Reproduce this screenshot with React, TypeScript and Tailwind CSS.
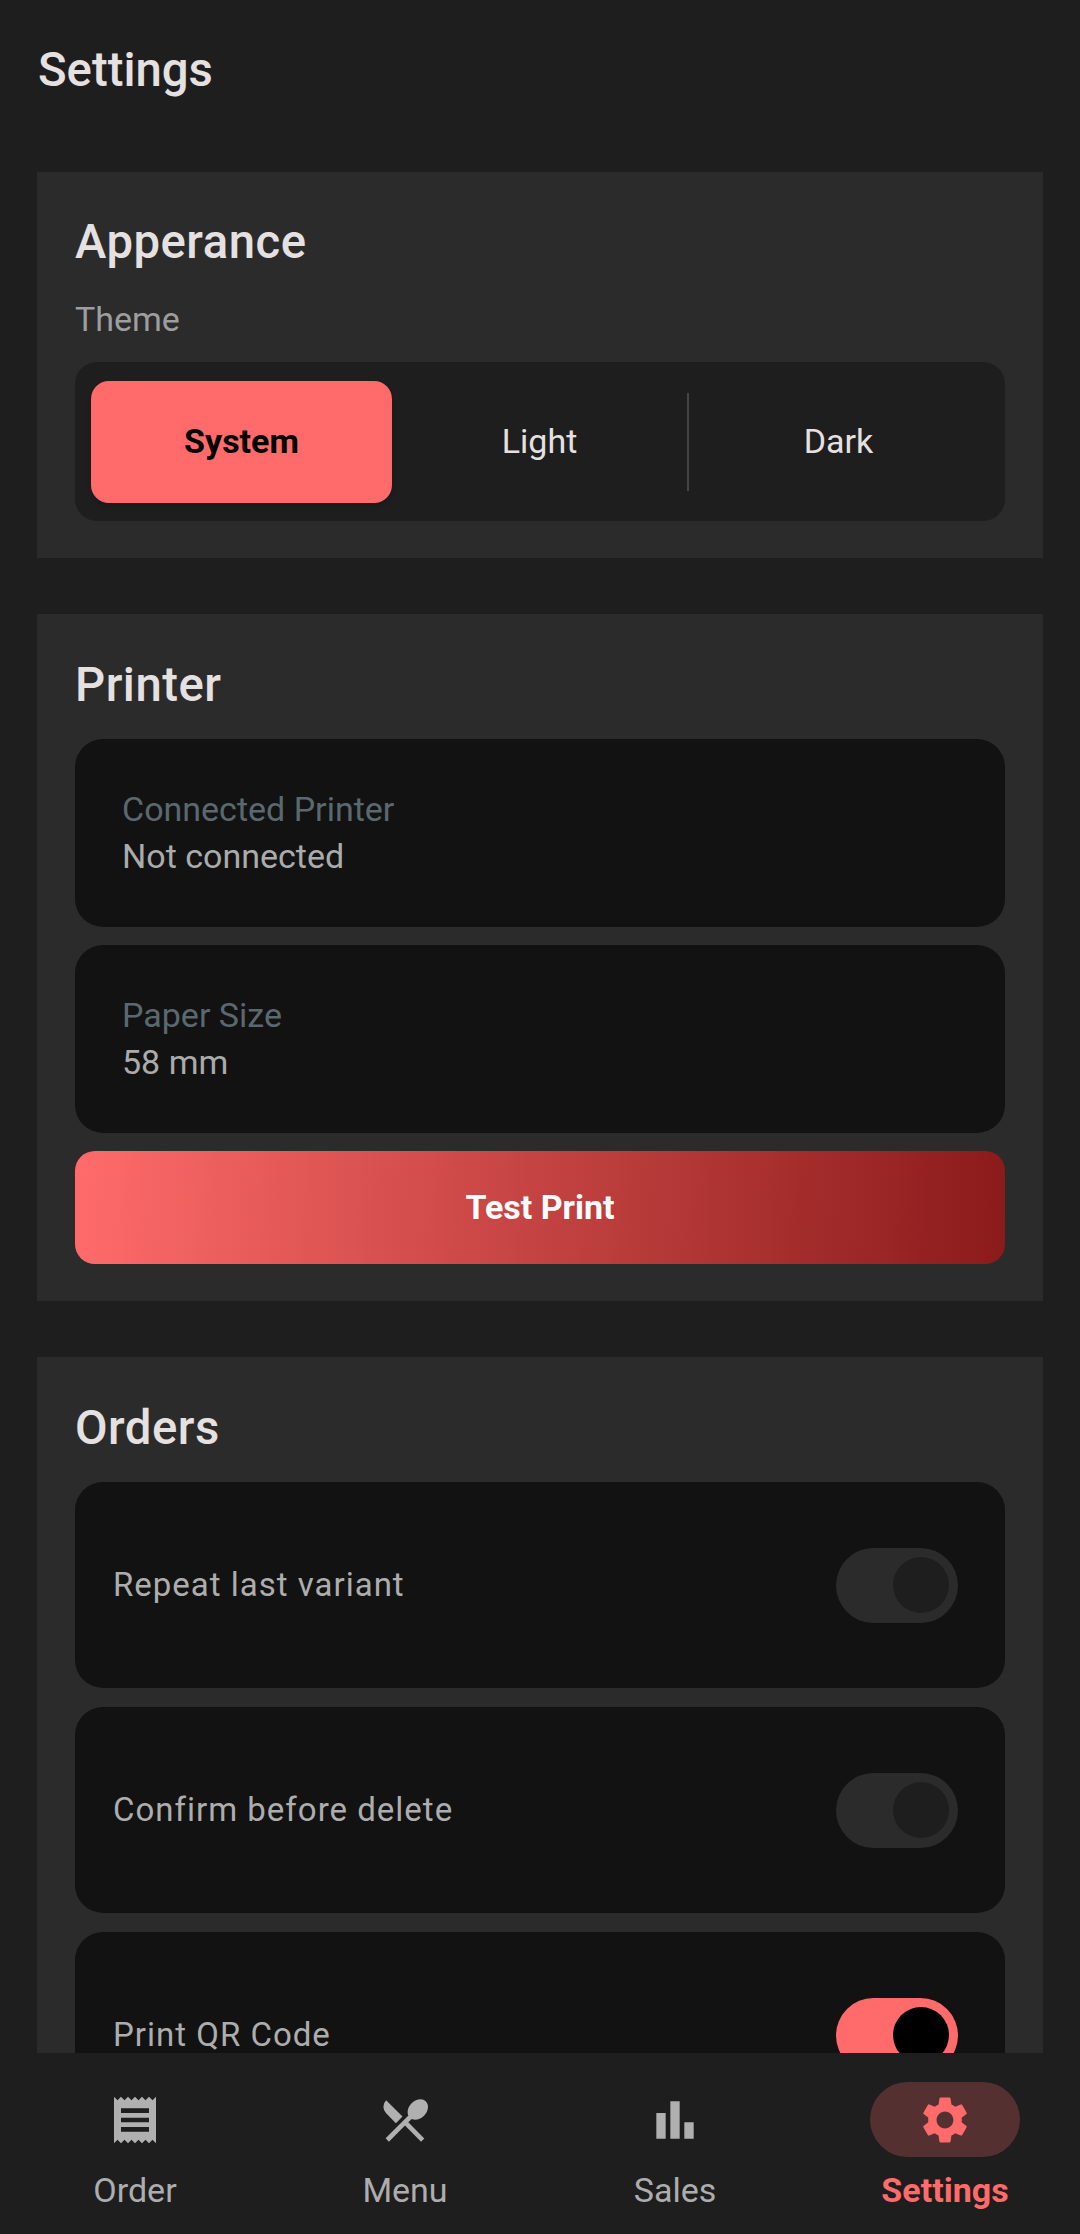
import { MdBarChart, MdReceipt, MdRestaurantMenu, MdSettings } from "react-icons/md";

function SectionTitle({ children }: { children: string }) {
  return (
    <h2 className="text-[47.25px] leading-[46px] font-medium tracking-[0.5px] text-[#e6e1e1]">
      {children}
    </h2>
  );
}

function InfoRow({ label, value }: { label: string; value: string }) {
  return (
    <div className="h-[187.5px] rounded-[28px] bg-[#121212] px-[47px] flex flex-col justify-center">
      <p className="text-[34px] leading-[47px] text-[#5b686e]">{label}</p>
      <p className="text-[34px] leading-[47px] text-[#ababab]">{value}</p>
    </div>
  );
}

function ToggleRow({ label, on }: { label: string; on?: boolean }) {
  return (
    <div className="h-[206px] shrink-0 rounded-[28px] bg-[#121212] pl-[38px] pr-[47px] flex items-center justify-between">
      <p className="text-[33px] text-[#adadad] tracking-[1px]">{label}</p>
      <div
        className={`w-[122px] h-[75px] rounded-full flex items-center justify-end pr-[9px] ${
          on ? "bg-[#ff6b6b]" : "bg-[#2b2b2b]"
        }`}
      >
        <div className={`w-[56px] h-[56px] rounded-full ${on ? "bg-black" : "bg-[#1e1e1e]"}`}></div>
      </div>
    </div>
  );
}

function NavItem({
  label,
  icon,
  active,
}: {
  label: string;
  icon: React.ReactNode;
  active?: boolean;
}) {
  return (
    <div className="flex-1 flex flex-col items-center">
      <div
        className={`w-[150px] h-[75px] rounded-full flex items-center justify-center ${
          active ? "bg-[#553030] text-[#ff6b6b]" : "text-[#b0b0b0]"
        }`}
      >
        {icon}
      </div>
      <p
        className={`mt-[11px] text-[34px] leading-[44px] ${
          active ? "font-bold text-[#ff6b6b]" : "text-[#adadad]"
        }`}
      >
        {label}
      </p>
    </div>
  );
}

export default function App() {
  return (
    <div className="font-['Roboto',sans-serif] w-[1080px] h-[2234px] bg-[#1e1e1e] flex flex-col overflow-hidden">
      <div className="flex-1 min-h-0 overflow-hidden">
        <h1 className="pl-[38px] pt-[44px] h-[172px] text-[47.25px] leading-[52px] font-medium text-[#e6e1e1]">
          Settings
        </h1>
        <div className="mx-[37px] flex flex-col gap-[56px]">
          <section className="h-[386px] bg-[#2b2b2b] px-[38px] pt-[47px]">
            <SectionTitle>Apperance</SectionTitle>
            <p className="mt-[31px] text-[34px] leading-[46px] text-[#9e9e9e]">Theme</p>
            <div className="mt-[20px] h-[159px] rounded-[22px] bg-[#1e1e1e] pl-[16px] pr-[17px] grid grid-cols-[301px_297px_1fr] items-center">
              <div className="h-[122px] rounded-[18px] bg-[#ff6b6b] flex items-center justify-center shadow-md">
                <span className="text-[34px] font-bold text-black">System</span>
              </div>
              <div className="h-[98px] flex items-center justify-center border-r-2 border-[#444444]">
                <span className="text-[34px] text-[#e6e1e1]">Light</span>
              </div>
              <div className="flex items-center justify-center">
                <span className="text-[34px] text-[#e6e1e1]">Dark</span>
              </div>
            </div>
          </section>

          <section className="h-[687px] bg-[#2b2b2b] px-[38px] pt-[48px]">
            <SectionTitle>Printer</SectionTitle>
            <div className="mt-[31px] flex flex-col gap-[18.5px]">
              <InfoRow label="Connected Printer" value="Not connected" />
              <InfoRow label="Paper Size" value="58 mm" />
              <div className="h-[113px] rounded-[20px] bg-linear-93 from-[#ff6b6b] to-[#8b1a1a] flex items-center justify-center">
                <span className="text-[34px] font-bold text-white">Test Print</span>
              </div>
            </div>
          </section>

          <section className="bg-[#2b2b2b] px-[38px] pt-[48px] pb-[38px]">
            <SectionTitle>Orders</SectionTitle>
            <div className="mt-[31px] flex flex-col gap-[19px]">
              <ToggleRow label="Repeat last variant" />
              <ToggleRow label="Confirm before delete" />
              <ToggleRow label="Print QR Code" on />
            </div>
          </section>
        </div>
      </div>

      <nav className="h-[181px] shrink-0 bg-[#1e1e1e] flex pt-[29px]">
        <NavItem label="Order" icon={<MdReceipt size={56} />} />
        <NavItem label="Menu" icon={<MdRestaurantMenu size={56} />} />
        <NavItem label="Sales" icon={<MdBarChart size={56} />} />
        <NavItem label="Settings" icon={<MdSettings size={56} />} active />
      </nav>
    </div>
  );
}
